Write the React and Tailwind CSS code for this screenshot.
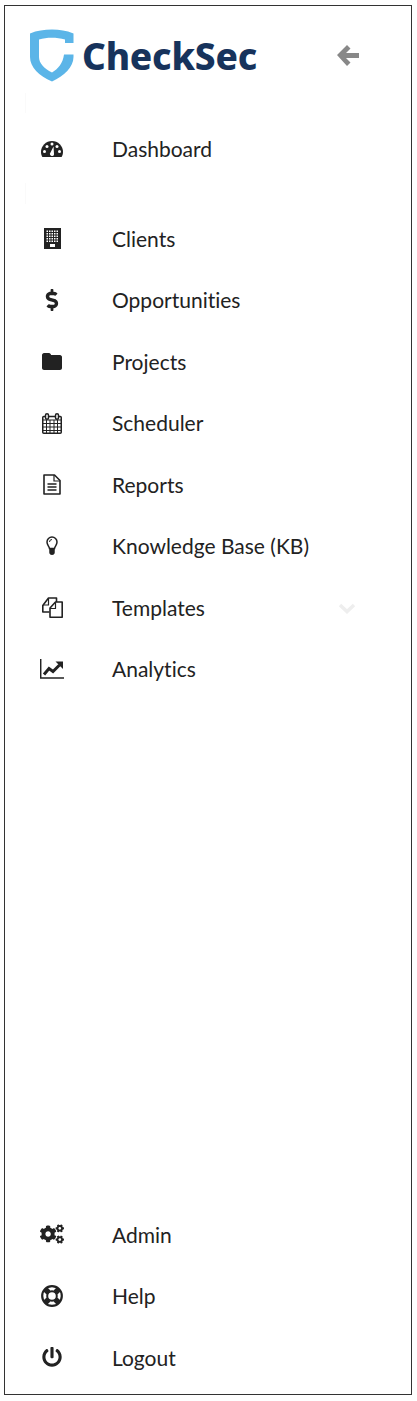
import React from "react";
import { FaCogs, FaDollarSign, FaPowerOff } from "react-icons/fa";

const ShieldLogo = () => (
  <svg width="44" height="53" viewBox="0 0 44 53" className="shrink-0">
    <path
      d="M0 4.500C7 1.500 14 .5 22 .5S36 1.500 43.500 4.500V14H35V10.500C31 9.300 26 8.800 22 8.800C17 8.800 13 9.300 9 10.500V28C9 34 14 39.500 22 43.500C28 40 33 34 34 25.500H43.500V28C43.500 38 34 47 22 52.500C9 47 0 38 0 28Z"
      fill="#5bb5e8"
    />
  </svg>
);

const DashboardIcon = () => (
  <svg width="22" height="16" viewBox="0 0 22 16" fill="#222">
    <path d="M0 11A11 11 0 0 1 22 11C22 13 21.400 14.700 20.600 16H1.400C.6 14.700 0 13 0 11Z" />
    <g fill="#fff">
      <circle cx="3.500" cy="10.500" r="1.500" />
      <circle cx="6" cy="5.500" r="1.500" />
      <circle cx="11" cy="3" r="1.500" />
      <circle cx="16" cy="5.500" r="1.500" />
      <circle cx="18.500" cy="10.500" r="1.500" />
      <path d="M9 12.500L12.500 5.500L13 13.500A2 2 0 0 1 9 12.500Z" />
    </g>
  </svg>
);

const windowCols = [2.5, 5, 7.5, 10, 12.5];
const windowRows = [2.5, 5, 7.5, 10, 12.5];

const BuildingIcon = () => (
  <svg width="17" height="21" viewBox="0 0 17 21">
    <rect width="17" height="21" fill="#222" />
    {windowRows.map((y) =>
      windowCols.map((x) => <rect key={`${x}-${y}`} x={x} y={y} width="1.500" height="1.500" fill="#fff" />)
    )}
    <rect x="6" y="16" width="5" height="3" fill="#fff" />
  </svg>
);

const FolderIcon = () => (
  <svg width="20" height="17" viewBox="0 0 20 17" fill="#222">
    <path d="M2 0H7C8 0 9 1 9 2H18C19 2 20 3 20 4V15C20 16 19 17 18 17H2C1 17 0 16 0 15V2C0 1 1 0 2 0Z" />
  </svg>
);

const CalendarIcon = () => (
  <svg width="20" height="21" viewBox="0 0 20 21" fill="none" stroke="#222" className="translate-y-px">
    <rect x="0.750" y="3.500" width="18.500" height="16.750" rx="1" strokeWidth="1.500" />
    <path d="M1 7H19M1 10.500H19M1 14H19M1 17.500H19M4.500 7V20M8 7V20M12 7V20M15.500 7V20" strokeWidth="1" />
    <rect x="3.500" y="0.750" width="3" height="5.500" rx="1.500" fill="#fff" strokeWidth="1.500" />
    <rect x="13.500" y="0.750" width="3" height="5.500" rx="1.500" fill="#fff" strokeWidth="1.500" />
  </svg>
);

const ReportIcon = () => (
  <svg width="18" height="21" viewBox="0 0 18 21" fill="none" stroke="#222">
    <path d="M1 1H11.500L17 6.500V20H1Z" strokeWidth="1.600" strokeLinejoin="round" />
    <path d="M11 1V7H17" strokeWidth="1.200" />
    <path d="M4.500 10H13.500M4.500 13H13.500M4.500 16H13.500" strokeWidth="1.300" />
  </svg>
);

const BulbIcon = () => (
  <svg width="12" height="19" viewBox="0 0 12 19" fill="none" stroke="#222">
    <path d="M3.500 12.500C3 10 1 9 1 6A5 5 0 0 1 11 6C11 9 9 10 8.500 12.500Z" strokeWidth="1.500" />
    <path d="M3.500 13H8.500V16.500C8.500 18 7 19 6 19S3.500 18 3.500 16.500Z" fill="#222" strokeWidth="0.500" />
    <path d="M3.500 6A2.500 2.500 0 0 1 6 3.500" strokeWidth="1" />
  </svg>
);

const FilesIcon = () => (
  <svg width="21" height="21" viewBox="0 0 21 21" fill="none" stroke="#222" strokeLinejoin="round">
    <path d="M7.500 15H.8V8.500L6.500 1H14.500V5.500" strokeWidth="1.600" />
    <path d="M6.500 1.500V8H1" strokeWidth="1.200" />
    <path d="M8 20.200H20.200V5H13.500L8 11Z" fill="#fff" strokeWidth="1.600" />
    <path d="M13.500 5.500V11.500H8" strokeWidth="1.200" />
  </svg>
);

const ChartIcon = () => (
  <svg width="24" height="20" viewBox="0 0 24 20" fill="none" stroke="#222">
    <path d="M.7 0V19H24" strokeWidth="1.500" />
    <path d="M4 15.500L9 9.500L13 12.500L19.500 6" strokeWidth="3" />
    <path d="M15.500 2.500H23V10Z" fill="#222" strokeWidth="0" />
  </svg>
);

const LifeRingIcon = () => (
  <svg width="22" height="22" viewBox="0 0 22 22" fill="none" stroke="#222">
    <circle cx="11" cy="11" r="9.800" strokeWidth="2.200" />
    <circle cx="11" cy="11" r="4.800" strokeWidth="2" />
    <path d="M4 4L7.500 7.500M18 4L14.500 7.500M4 18L7.500 14.500M18 18L14.500 14.500" strokeWidth="5.500" />
  </svg>
);

const topItem = { label: "Dashboard", icon: <DashboardIcon /> };

const mainItems = [
  { label: "Clients", icon: <BuildingIcon /> },
  { label: "Opportunities", icon: <FaDollarSign size={22} /> },
  { label: "Projects", icon: <FolderIcon /> },
  { label: "Scheduler", icon: <CalendarIcon /> },
  { label: "Reports", icon: <ReportIcon /> },
  { label: "Knowledge Base (KB)", icon: <BulbIcon /> },
  { label: "Templates", icon: <FilesIcon />, chevron: true },
  { label: "Analytics", icon: <ChartIcon /> },
];

const bottomItems = [
  { label: "Admin", icon: <FaCogs size={24} /> },
  { label: "Help", icon: <LifeRingIcon /> },
  { label: "Logout", icon: <FaPowerOff size={20} /> },
];

const NavItem = ({ item }) => (
  <a className="flex h-[61.5px] items-center text-[#222]">
    <span className="mr-[13px] flex w-[94px] shrink-0 items-center justify-center">{item.icon}</span>
    <span className="text-[21px] leading-none [font-variant-ligatures:none]">{item.label}</span>
    {item.chevron && (
      <svg width="18" height="11" viewBox="0 0 18 11" fill="none" className="mr-[55px] ml-auto translate-y-px">
        <path d="M2 2L9 8.500L16 2" stroke="#eeeeee" strokeWidth="3.500" />
      </svg>
    )}
  </a>
);

export default function App() {
  return (
    <div className="h-[1401px] w-[417px] bg-white pt-[5px] pr-[5px] pb-[6px] pl-[4px] font-['Lato',sans-serif]">
      <aside className="flex h-full flex-col border border-[#333]">
        <header className="flex h-[87px] items-center pt-[11px] pl-[25px]">
          <ShieldLogo />
          <span className="ml-[8px] font-['Noto_Sans',sans-serif] text-[37px] leading-none font-extrabold tracking-[-0.2px] text-[#17335c]">
            CheckSec
          </span>
          <svg width="22" height="22" viewBox="0 0 22 22" fill="#888888" className="mr-[52px] ml-auto">
            <path d="M0 11L10 1L13.500 4.500L9 9H22V14H9L13.500 18.500L10 22Z" />
          </svg>
        </header>
        <div className="ml-[20px] h-[20px] w-px bg-[#fafafa]" />
        <nav className="mt-[5px]">
          <NavItem item={topItem} />
        </nav>
        <div className="mt-[3.5px] ml-[20px] h-[21px] w-px bg-[#fafafa]" />
        <nav className="mt-[3.5px]">
          {mainItems.map((item) => (
            <NavItem key={item.label} item={item} />
          ))}
        </nav>
        <nav className="mt-auto pb-[6px]">
          {bottomItems.map((item) => (
            <NavItem key={item.label} item={item} />
          ))}
        </nav>
      </aside>
    </div>
  );
}
